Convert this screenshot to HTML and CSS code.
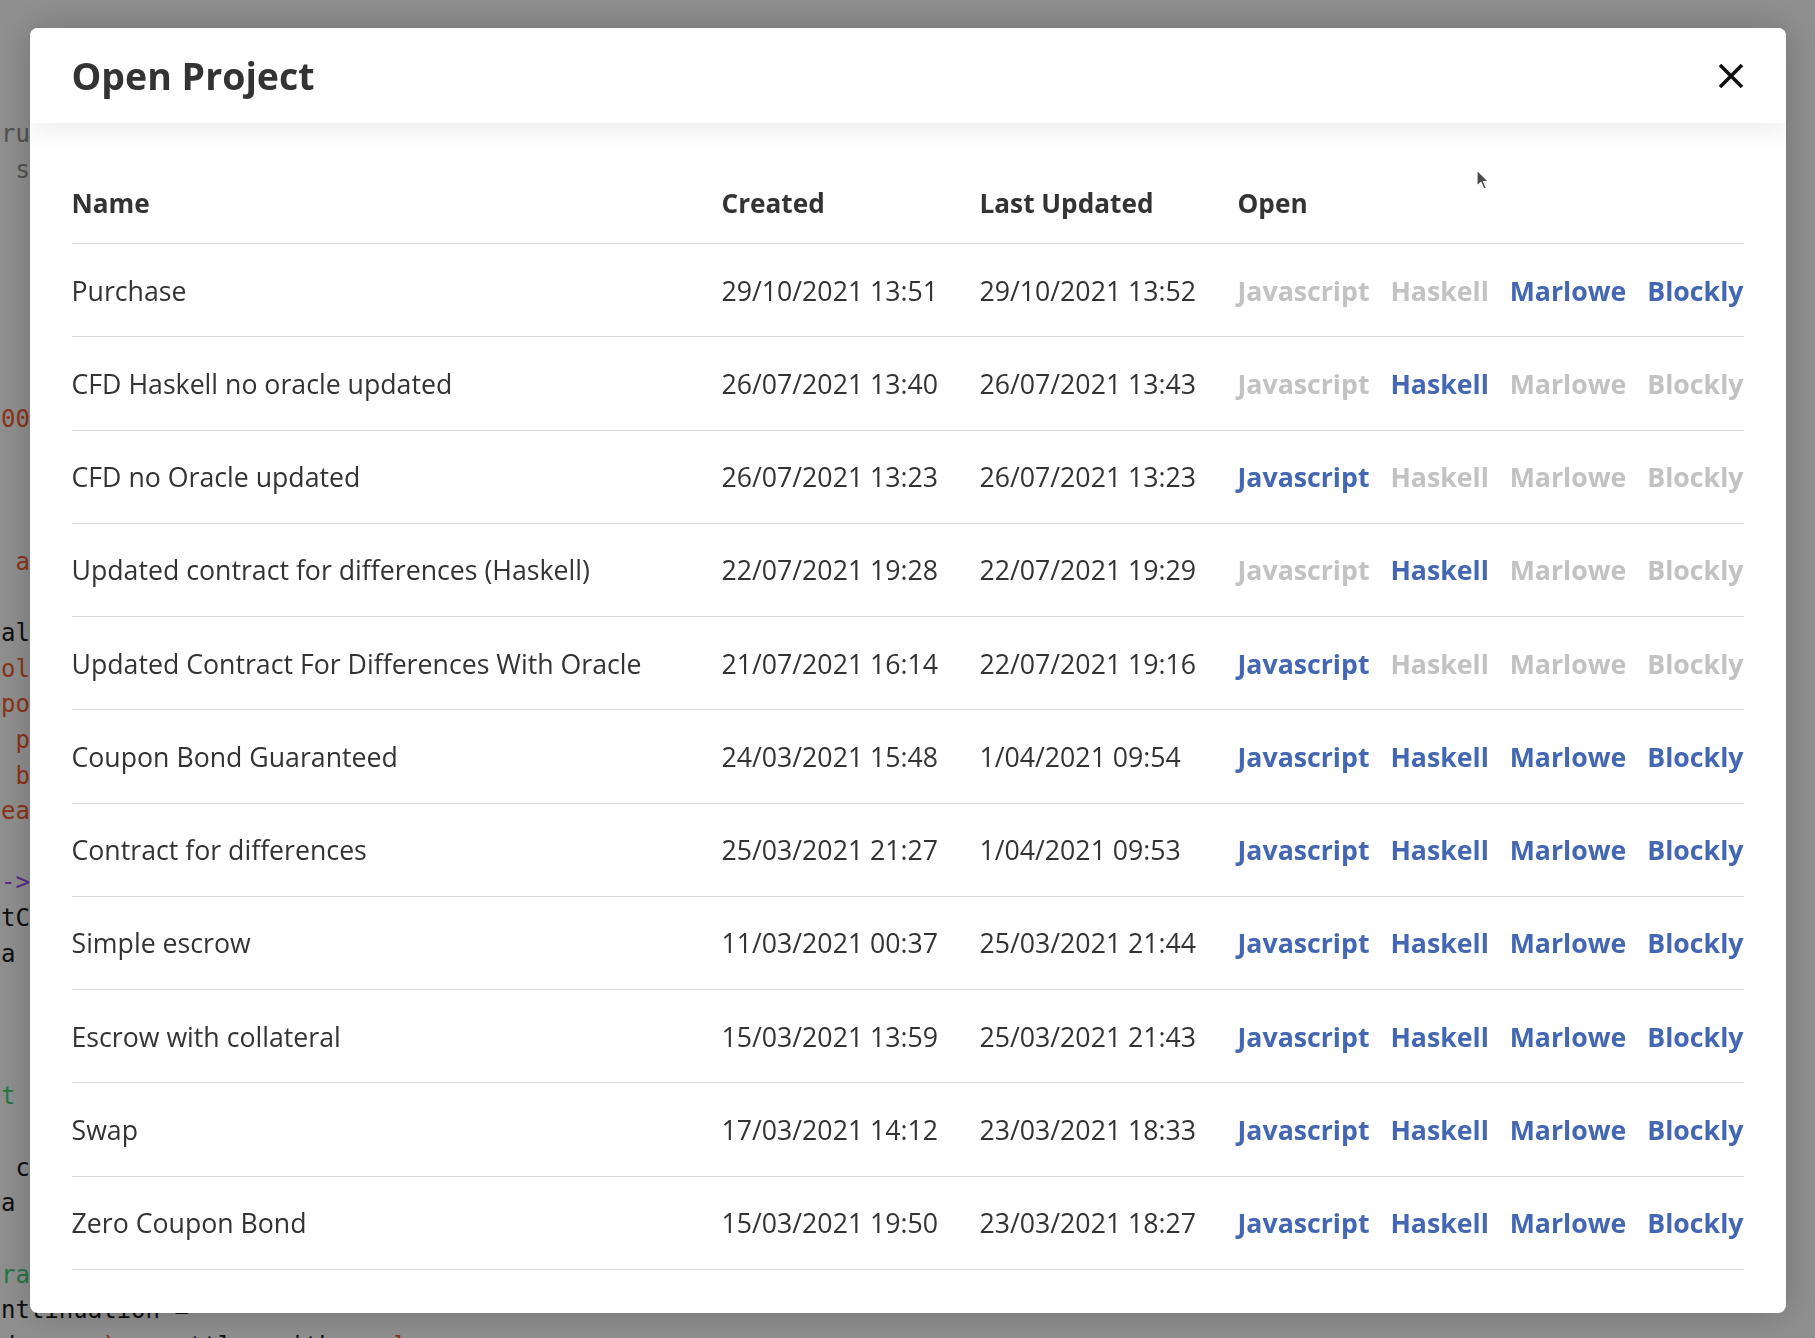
FILE: index.html
```html
<!DOCTYPE html>
<html lang="en">
<head>
<meta charset="utf-8">
<title>Open Project</title>
<link rel="stylesheet" href="styles.css">
</head>
<body>
<div class="editor">
  <div class="line"><span class="c-com">rules for settlement</span></div>
  <div class="line"><span class="c-com"> s the contract</span></div>
  <div class="line"></div>
  <div class="line"></div>
  <div class="line"></div>
  <div class="line"></div>
  <div class="line"></div>
  <div class="line"></div>
  <div class="line"><span class="c-str">0000000</span></div>
  <div class="line"></div>
  <div class="line"></div>
  <div class="line"></div>
  <div class="line"><span class="c-str"> a</span></div>
  <div class="line"></div>
  <div class="line"><span class="c-txt">al</span></div>
  <div class="line"><span class="c-str">oll</span></div>
  <div class="line"><span class="c-str">pos</span></div>
  <div class="line"><span class="c-str"> p</span></div>
  <div class="line"><span class="c-str"> b</span></div>
  <div class="line"><span class="c-str">ea</span></div>
  <div class="line"></div>
  <div class="line"><span class="c-op">-&gt;</span></div>
  <div class="line"><span class="c-txt">tC</span></div>
  <div class="line"><span class="c-txt">a</span></div>
  <div class="line"></div>
  <div class="line"></div>
  <div class="line"></div>
  <div class="line"><span class="c-kw">t</span></div>
  <div class="line"></div>
  <div class="line"><span class="c-txt"> c</span></div>
  <div class="line"><span class="c-txt">a</span></div>
  <div class="line"></div>
  <div class="line"><span class="c-kw">ra</span></div>
  <div class="line"><span class="c-txt">nttinuation =</span></div>
  <div class="line"><span class="c-txt">d      </span><span class="c-str">)</span><span class="c-txt">   settle  with    </span><span class="c-str">]</span></div>
</div>

<div class="overlay">
  <div class="modal">
    <div class="modal-header">
      <h1 class="modal-title">Open Project</h1>
      <button class="close" aria-label="Close">
        <svg width="26" height="26" viewBox="0 0 26 26"><path d="M2 2 L24 24 M24 2 L2 24" stroke="#111" stroke-width="3.6" stroke-linecap="butt" fill="none"/></svg>
      </button>
    </div>
    <div class="modal-body">
      <div class="row head">
        <div class="cell">Name</div>
        <div class="cell">Created</div>
        <div class="cell">Last Updated</div>
        <div class="cell">Open</div>
      </div>

      <div class="row">
        <div class="cell">Purchase</div>
        <div class="cell">29/10/2021 13:51</div>
        <div class="cell">29/10/2021 13:52</div>
        <div class="cell links"><span class="lnk off">Javascript</span><span class="lnk off">Haskell</span><span class="lnk">Marlowe</span><span class="lnk">Blockly</span></div>
      </div>
      <div class="row">
        <div class="cell">CFD Haskell no oracle updated</div>
        <div class="cell">26/07/2021 13:40</div>
        <div class="cell">26/07/2021 13:43</div>
        <div class="cell links"><span class="lnk off">Javascript</span><span class="lnk">Haskell</span><span class="lnk off">Marlowe</span><span class="lnk off">Blockly</span></div>
      </div>
      <div class="row">
        <div class="cell">CFD no Oracle updated</div>
        <div class="cell">26/07/2021 13:23</div>
        <div class="cell">26/07/2021 13:23</div>
        <div class="cell links"><span class="lnk">Javascript</span><span class="lnk off">Haskell</span><span class="lnk off">Marlowe</span><span class="lnk off">Blockly</span></div>
      </div>
      <div class="row">
        <div class="cell">Updated contract for differences (Haskell)</div>
        <div class="cell">22/07/2021 19:28</div>
        <div class="cell">22/07/2021 19:29</div>
        <div class="cell links"><span class="lnk off">Javascript</span><span class="lnk">Haskell</span><span class="lnk off">Marlowe</span><span class="lnk off">Blockly</span></div>
      </div>
      <div class="row">
        <div class="cell">Updated Contract For Differences With Oracle</div>
        <div class="cell">21/07/2021 16:14</div>
        <div class="cell">22/07/2021 19:16</div>
        <div class="cell links"><span class="lnk">Javascript</span><span class="lnk off">Haskell</span><span class="lnk off">Marlowe</span><span class="lnk off">Blockly</span></div>
      </div>
      <div class="row">
        <div class="cell">Coupon Bond Guaranteed</div>
        <div class="cell">24/03/2021 15:48</div>
        <div class="cell">1/04/2021 09:54</div>
        <div class="cell links"><span class="lnk">Javascript</span><span class="lnk">Haskell</span><span class="lnk">Marlowe</span><span class="lnk">Blockly</span></div>
      </div>
      <div class="row">
        <div class="cell">Contract for differences</div>
        <div class="cell">25/03/2021 21:27</div>
        <div class="cell">1/04/2021 09:53</div>
        <div class="cell links"><span class="lnk">Javascript</span><span class="lnk">Haskell</span><span class="lnk">Marlowe</span><span class="lnk">Blockly</span></div>
      </div>
      <div class="row">
        <div class="cell">Simple escrow</div>
        <div class="cell">11/03/2021 00:37</div>
        <div class="cell">25/03/2021 21:44</div>
        <div class="cell links"><span class="lnk">Javascript</span><span class="lnk">Haskell</span><span class="lnk">Marlowe</span><span class="lnk">Blockly</span></div>
      </div>
      <div class="row">
        <div class="cell">Escrow with collateral</div>
        <div class="cell">15/03/2021 13:59</div>
        <div class="cell">25/03/2021 21:43</div>
        <div class="cell links"><span class="lnk">Javascript</span><span class="lnk">Haskell</span><span class="lnk">Marlowe</span><span class="lnk">Blockly</span></div>
      </div>
      <div class="row">
        <div class="cell">Swap</div>
        <div class="cell">17/03/2021 14:12</div>
        <div class="cell">23/03/2021 18:33</div>
        <div class="cell links"><span class="lnk">Javascript</span><span class="lnk">Haskell</span><span class="lnk">Marlowe</span><span class="lnk">Blockly</span></div>
      </div>
      <div class="row">
        <div class="cell">Zero Coupon Bond</div>
        <div class="cell">15/03/2021 19:50</div>
        <div class="cell">23/03/2021 18:27</div>
        <div class="cell links"><span class="lnk">Javascript</span><span class="lnk">Haskell</span><span class="lnk">Marlowe</span><span class="lnk">Blockly</span></div>
      </div>
    </div>
  </div>
</div>

<svg class="cursor" width="14" height="22" viewBox="0 0 14 22"><path d="M1 1 L1 17 L5 13.5 L8 20 L10.5 19 L7.5 12.5 L12.5 12.5 Z" fill="#4a4a4a" stroke="#fff" stroke-width="1.2" stroke-linejoin="round"/></svg>
</body>
</html>
```

FILE: styles.css
```css
* { box-sizing: border-box; }
html, body { margin: 0; padding: 0; }
body {
  width: 1815px;
  height: 1338px;
  overflow: hidden;
  background: #ffffff;
  font-family: "Open Sans", "Noto Sans", sans-serif;
}

.editor {
  height: 1338px;
  overflow: hidden;
  padding-top: 117px;
  padding-left: 1px;
  font-family: "DejaVu Sans Mono", "Liberation Mono", monospace;
  font-size: 24px;
}
.line {
  height: 35.65px;
  line-height: 35.65px;
  white-space: pre;
}
.c-com { color: #8f8f8f; }
.c-str { color: #f55c2e; }
.c-txt { color: #1a1a1a; }
.c-op  { color: #a348f5; }
.c-kw  { color: #44d27c; }

.overlay {
  position: fixed;
  inset: 0;
  background: rgba(0, 0, 0, 0.44);
  display: flex;
  justify-content: center;
  align-items: flex-start;
  padding-top: 28px;
}

.modal {
  width: 1756px;
  background: #fff;
  border-radius: 8px;
  overflow: hidden;
  box-shadow: 0 0 36px rgba(0, 0, 0, 0.22);
}

.modal-header {
  position: relative;
  z-index: 1;
  height: 95px;
  padding: 0 42px 0 42px;
  display: flex;
  align-items: center;
  justify-content: space-between;
  background: #fff;
  box-shadow: 0 8px 24px rgba(0, 0, 0, 0.075);
}
.modal-title {
  margin: 0;
  font-size: 37.5px;
  font-weight: 700;
  color: #333;
  line-height: 1;
}
.close {
  border: 0;
  background: none;
  padding: 0;
  width: 26px;
  height: 26px;
  display: flex;
  align-items: center;
  justify-content: center;
  margin-top: 1px;
}

.modal-body {
  padding: 40px 42px 43px;
}

.row {
  display: grid;
  grid-template-columns: 650px 258px 258px 1fr;
  align-items: center;
  height: 93.27px;
  border-bottom: 1px solid #d7d7d7;
  font-size: 26.7px;
  color: #333;
}
.row.head {
  height: 81px;
  font-weight: 700;
  font-size: 26.2px;
}
.cell { white-space: nowrap; }
.links {
  display: flex;
  justify-content: space-between;
}
.lnk {
  font-weight: 700;
  color: #4367b2;
}
.lnk.off { color: #c2c2c2; }

.cursor {
  position: absolute;
  left: 1476px;
  top: 169px;
}
```
